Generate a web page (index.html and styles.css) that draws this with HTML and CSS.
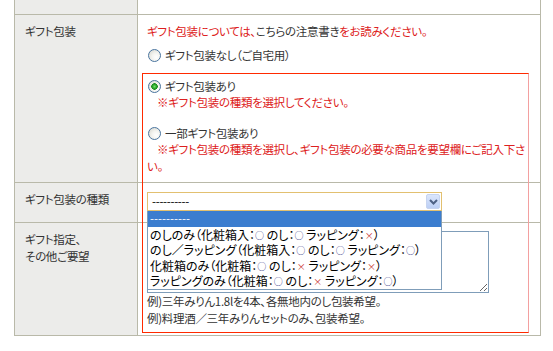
FILE: index.html
```html
<!DOCTYPE html>
<html lang="ja">
<head>
    <meta charset="UTF-8">
    <meta name="viewport" content="width=device-width, initial-scale=1.0">
    <title>ギフト包装</title>
    <link rel="stylesheet" href="styles.css">
</head>
<body>

    <div class="form-wrap">
        <table class="form-table">
            <!-- tail of the previous row -->
            <tr class="row-cut">
                <th></th>
                <td></td>
            </tr>
            <tr>
                <th>ギフト包装</th>
                <td class="cell-gift">
                    <p class="lead"><span class="warn">ギフト包装については、</span><a href="#">こちらの注意書き</a><span class="warn">をお読みください。</span></p>
                    <label class="opt"><input type="radio" name="gift"><span>ギフト包装なし（ご自宅用）</span></label>
                    <div class="opt-group">
                        <label class="opt"><input type="radio" name="gift" checked><span>ギフト包装あり</span></label>
                        <p class="note">※ギフト包装の種類を選択してください。</p>
                        <label class="opt opt-gap"><input type="radio" name="gift"><span>一部ギフト包装あり</span></label>
                        <p class="note">※ギフト包装の種類を選択し、ギフト包装の必要な商品を要望欄にご記入下さい。</p>
                    </div>
                </td>
            </tr>
            <tr>
                <th class="th-kind">ギフト包装の種類</th>
                <td class="cell-kind">
                    <div class="select">
                        <div class="select-box">
                            <span class="select-value">----------</span>
                            <span class="select-btn">
                                <svg width="9" height="6" viewBox="0 0 9 6"><path d="M1 1 L4.5 4.5 L8 1" fill="none" stroke="#4d6185" stroke-width="2"/></svg>
                            </span>
                        </div>
                        <ul class="select-list">
                            <li class="is-active">----------</li>
                            <li>のしのみ（化粧箱入：<span class="mk-o">○</span> のし：<span class="mk-o">○</span> ラッピング：<span class="mk-x">×</span>）</li>
                            <li>のし／ラッピング（化粧箱入：<span class="mk-o">○</span> のし：<span class="mk-o">○</span> ラッピング：<span class="mk-o">○</span>）</li>
                            <li>化粧箱のみ（化粧箱：<span class="mk-o">○</span> のし：<span class="mk-x">×</span> ラッピング：<span class="mk-x">×</span>）</li>
                            <li>ラッピングのみ（化粧箱：<span class="mk-o">○</span> のし：<span class="mk-x">×</span> ラッピング：<span class="mk-o">○</span>）</li>
                        </ul>
                    </div>
                </td>
            </tr>
            <tr>
                <th>ギフト指定、<br>その他ご要望</th>
                <td class="cell-memo">
                    <textarea class="memo"></textarea>
                    <p class="hint">例)三年みりん1.8lを4本、各無地内のし包装希望。</p>
                    <p class="hint">例)料理酒／三年みりんセットのみ、包装希望。</p>
                </td>
            </tr>
        </table>

        <!-- error frame drawn over the rows -->
        <div class="alert-frame"></div>
    </div>

</body>
</html>
```

FILE: styles.css
```css
/* General */
body {
    margin: 0;
    font-family: "Noto Sans CJK JP", "Noto Sans", sans-serif;
    font-size: 11.5px;
    line-height: 17px;
    letter-spacing: -0.3px;
    color: #333;
    background: #fff;
    font-feature-settings: "palt";
}

p {
    margin: 0;
}

.form-wrap {
    position: relative;
    padding-left: 14px;
}

/* Table */
.form-table {
    border-collapse: collapse;
    width: 527px;
}

.form-table th,
.form-table td {
    border: 1px solid #b9b9a9;
    vertical-align: top;
    text-align: left;
}

.form-table th {
    width: 102px;
    padding: 8px 10px;
    background: #ececea;
    font-weight: normal;
}

.form-table td {
    padding: 8px 9px;
}

.row-cut th,
.row-cut td {
    height: 14px;
    padding: 0;
    border-top: 0;
}

/* Gift wrapping row */
.cell-gift {
    padding-bottom: 7px !important;
}

.warn {
    color: #dd2020;
}

.lead a {
    color: #333;
    text-decoration: none;
}

.opt {
    display: flex;
    align-items: center;
    height: 15px;
    margin-top: 8px;
}

.opt-group {
    margin-top: 16px;
}

.opt-group .opt {
    margin-top: 0;
}

.opt-group .opt-gap {
    margin-top: 15px;
}

.opt input {
    appearance: none;
    -webkit-appearance: none;
    width: 13px;
    height: 13px;
    margin: 0 4px 0 1px;
    border: 1px solid #4a75a0;
    border-radius: 50%;
    background: radial-gradient(circle at 65% 65%, #fff 0, #f4f4f0 40%, #d4d4cc 100%);
}

.opt input:checked {
    background:
        radial-gradient(circle at 50% 50%, #6fe06a 0, #2aa52a 2px, #1b8a1b 3px, transparent 3.5px),
        radial-gradient(circle at 65% 65%, #fff 0, #f4f4f0 40%, #d4d4cc 100%);
}

.note {
    color: #dd2020;
    text-indent: 10px;
}

.alert-frame {
    position: absolute;
    left: 142px;
    top: 73px;
    width: 387px;
    height: 260px;
    box-sizing: border-box;
    border: 1px solid #ff2a00;
    border-right-color: #f3a0a0;
    pointer-events: none;
}

/* Select (opened) */
.th-kind {
    padding-top: 8px;
}

.cell-kind {
    padding-top: 9px !important;
    padding-bottom: 11px !important;
}

.select {
    position: relative;
    width: 295px;
}

.select-box {
    display: flex;
    align-items: center;
    justify-content: space-between;
    height: 19px;
    box-sizing: border-box;
    border: 1px solid #e2c070;
    background: #fff;
    padding: 0 1px 0 4px;
    color: #000;
}

.select-btn {
    display: flex;
    align-items: center;
    justify-content: center;
    width: 14px;
    height: 15px;
    border-radius: 2px;
    background: linear-gradient(#dbe6fb, #bccff5);
    border: 1px solid #c6d4f0;
    box-sizing: border-box;
}

.select-list {
    position: absolute;
    left: 0;
    top: 19px;
    width: 295px;
    box-sizing: border-box;
    margin: 0;
    padding: 0;
    list-style: none;
    background: #fff;
    border: 1px solid #7f9db9;
    border-top: 0;
    color: #000;
    font-size: 12px;
    letter-spacing: 0;
    z-index: 2;
}

.select-list li {
    height: 15.5px;
    line-height: 15.5px;
    padding-left: 2px;
    white-space: nowrap;
}

.select-list li.is-active {
    background: #3b7dcf;
    color: #fff;
    font-size: 11.5px;
}

.mk-o,
.mk-x {
    font-size: 9px;
    line-height: 1;
    vertical-align: 1px;
}

.mk-o {
    color: #3a3a8a;
}

.mk-x {
    color: #c8302a;
}

/* Memo row */
.memo {
    display: block;
    width: 342px;
    height: 62px;
    box-sizing: border-box;
    margin: 0;
    border: 1px solid #7f9db9;
    font-family: inherit;
}

.hint {
    color: #333;
}
```
